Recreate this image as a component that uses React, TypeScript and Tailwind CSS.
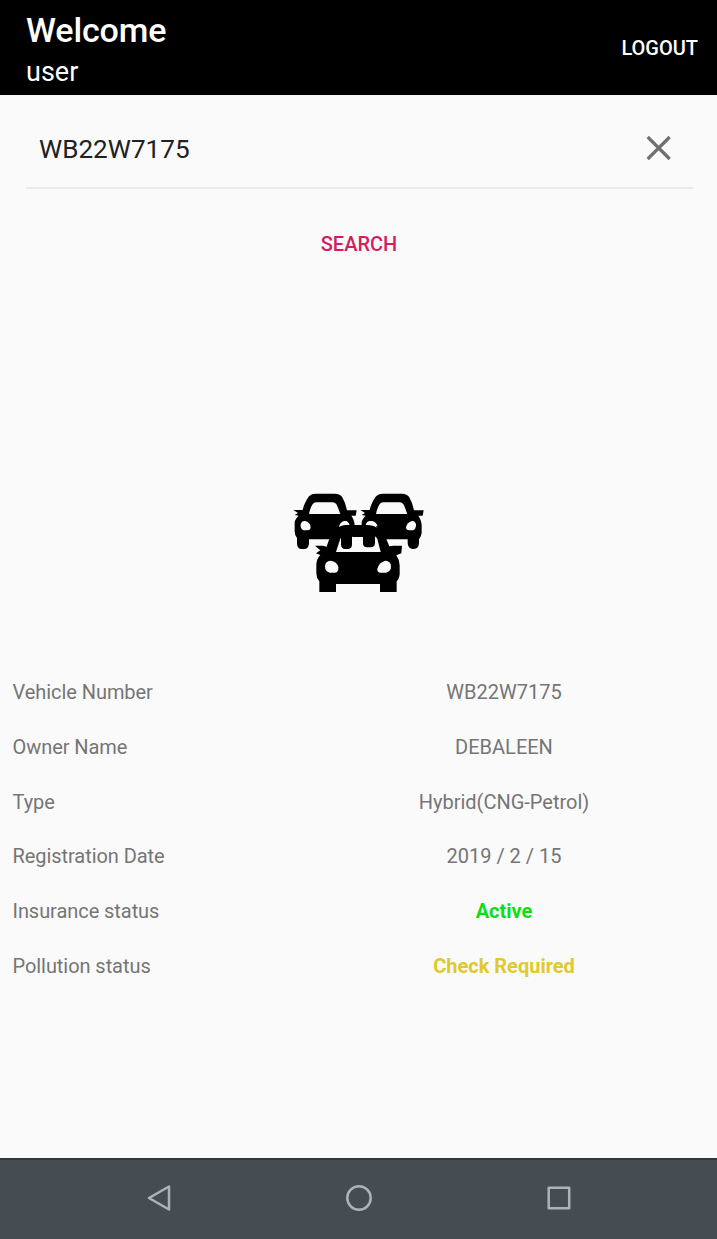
const rows = [
  { label: "Vehicle Number", value: "WB22W7175", tone: "" },
  { label: "Owner Name", value: "DEBALEEN", tone: "" },
  { label: "Type", value: "Hybrid(CNG-Petrol)", tone: "" },
  { label: "Registration Date", value: "2019 / 2 / 15", tone: "" },
  { label: "Insurance status", value: "Active", tone: "font-bold text-[#10dd16]" },
  { label: "Pollution status", value: "Check Required", tone: "font-bold text-[#dfc92f]" },
];

function CarsIcon() {
  return (
    <svg width="160" height="125" viewBox="0 0 480 375" role="img" aria-label="Vehicles">
      <RearCar x={0} />
      <RearCar x={201} />
      <path
        d="M105 197H129L140 200C145 184 153 162 164 147Q175 135 198 135H270Q294 135 302 147C312 160 322 182 328 199L340 197H366L364 220L349 226Q359 240 359 256V282Q358 297 350 304V336H300V312H168V336H118V304Q109 294 109 280V252Q110 236 121 225L108 220L121 211Z"
        fill="#000"
      />
      <path d="M168 216L181 176Q184 168 193 168H280Q288 168 292 176L302 216Z" fill="#fafafa" />
      <path d="M183 140H216V194Q215 207 203 207H195Q184 206 183 194ZM249 145H285V190Q284 202 272 202H260Q250 201 249 191ZM182 140H285V171H218Z" fill="#000" />
      <path d="M177 141Q181 124 194 123Q205 125 209 135Q190 133 177 141ZM257 135Q260 123 271 123Q285 124 290 143Q279 134 257 135Z" fill="#fafafa" />
      <path d="M136 253Q140 242 152 242Q171 244 175 262Q176 278 165 278H149Q135 273 135 260Z" fill="#fafafa" />
      <path d="M332 253Q328 242 316 242Q297 247 292 266Q291 278 302 278H318Q333 273 333 260Z" fill="#fafafa" />
    </svg>
  );
}

function RearCar({ x }: { x: number }) {
  return (
    <g transform={`translate(${x} 0)`}>
      <path
        d="M40 90H68C71 76 79 58 88 48Q95 41 107 41H165Q178 41 186 50Q197 68 201 91H230L227 107H214Q224 121 224 139V158Q223 170 216 178V190Q215 207 200 207H196Q183 205 182 190V178H87V191Q85 207 73 207H64Q52 206 51 191V174Q44 166 44 153V126Q45 118 56 107L44 105L54 99Z"
        fill="#000"
      />
      <path d="M87 102Q92 78 99 71Q103 67 110 67H158Q167 67 172 78L181 102Z" fill="#fafafa" />
      <path d="M62 133Q65 122 75 123Q90 125 92 142Q92 151 82 151H71Q60 147 62 133Z" fill="#fafafa" />
      <path d="M207 133Q204 122 195 123Q180 127 177 142Q177 151 187 151H198Q208 147 207 133Z" fill="#fafafa" />
    </g>
  );
}

export default function App() {
  return (
    <div className="flex h-[1239px] w-[717px] flex-col overflow-hidden bg-[#fafafa] font-['Roboto',sans-serif]">
      <header className="flex h-[95px] shrink-0 items-center justify-between bg-black pl-[26px] pr-[19px] text-white">
        <div className="h-full pt-[10px]">
          <h1 className="text-[34px] font-medium leading-10 tracking-[-0.12px]">Welcome</h1>
          <p className="text-[27px] leading-[44px]">user</p>
        </div>
        <button className="text-[20px] font-medium leading-6">LOGOUT</button>
      </header>

      <main className="flex flex-1 flex-col">
        <div className="ml-[26px] mr-[24px] flex h-[94px] items-center justify-between border-b-2 border-[#e9e9e9] pl-[13px] pr-[21px] pt-[14px]">
          <span className="pt-[2px] text-[26.1px] leading-8 text-[#212121]">WB22W7175</span>
          <button aria-label="Clear">
            <svg width="26" height="26" viewBox="0 0 26 26" fill="none" stroke="#707070" strokeWidth="3.2">
              <path d="M1.7 2L23.7 24M23.7 2L1.7 24" />
            </svg>
          </button>
        </div>
        <button className="mt-[43px] h-6 w-full pl-px text-center text-[20px] font-medium leading-6 text-[#d81b60]">
          SEARCH
        </button>
        <div className="mt-[224px] flex h-[125px] pl-[280px]">
          <CarsIcon />
        </div>
        <dl className="mt-[60px]">
          {rows.map((row) => (
            <div key={row.label} className="flex h-[54.65px] items-center pl-[12.5px] text-[20px] leading-6 text-[#757575]">
              <dt className="w-[278.5px] tracking-[-0.06px]">{row.label}</dt>
              <dd className={`flex-1 text-center ${row.tone}`}>{row.value}</dd>
            </div>
          ))}
        </dl>
      </main>

      <nav className="grid h-[81px] shrink-0 grid-cols-[59px_200px_200px_200px_58px] border-t-2 border-[#34383c] bg-[#454d53] pb-[3px]">
        <span />
        <button aria-label="Back" className="flex items-center justify-center">
          <svg width="28" height="28" viewBox="0 0 28 28" fill="none" stroke="#adb4b9" strokeWidth="2.5" strokeLinejoin="round">
            <path d="M4 14L24 2.5V25.5Z" />
          </svg>
        </button>
        <button aria-label="Home" className="flex items-center justify-center">
          <svg width="28" height="28" viewBox="0 0 28 28" fill="none" stroke="#adb4b9" strokeWidth="2.5">
            <circle cx="14" cy="14" r="11.7" />
          </svg>
        </button>
        <button aria-label="Recent apps" className="flex items-center justify-center">
          <svg width="28" height="28" viewBox="0 0 28 28" fill="none" stroke="#adb4b9" strokeWidth="2.5" strokeLinejoin="round">
            <rect x="3.7" y="3.7" width="20.5" height="20.5" />
          </svg>
        </button>
      </nav>
    </div>
  );
}
